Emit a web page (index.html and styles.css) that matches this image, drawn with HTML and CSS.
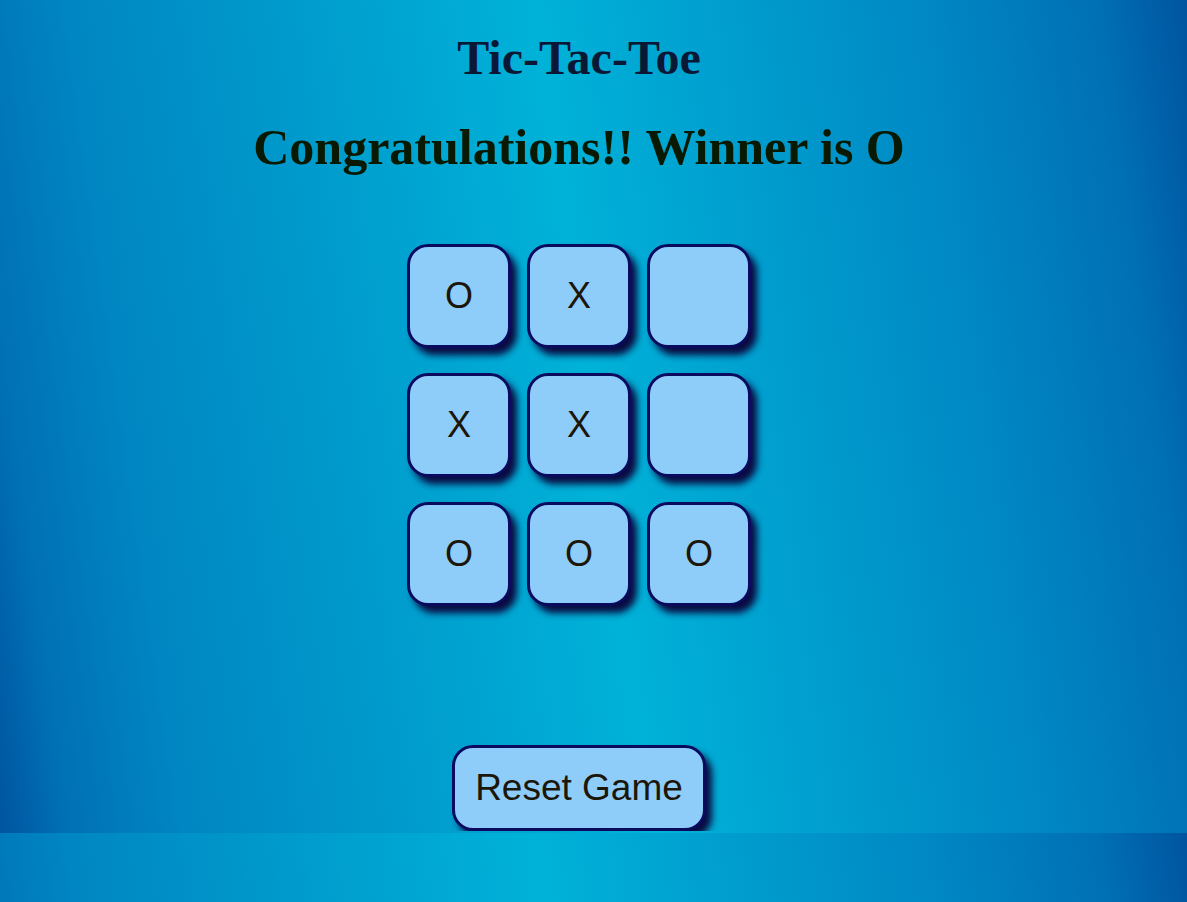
FILE: index.html
```html
<!DOCTYPE html>
<html lang="en">
<head>
<meta charset="utf-8">
<title>Tic-Tac-Toe</title>
<link rel="stylesheet" href="styles.css">
</head>
<body>
<main class="game">
  <h1 class="title">Tic-Tac-Toe</h1>
  <h2 class="msg">Congratulations!! Winner is O</h2>
  <div class="board">
    <button class="cell">O</button>
    <button class="cell">X</button>
    <button class="cell"></button>
    <button class="cell">X</button>
    <button class="cell">X</button>
    <button class="cell"></button>
    <button class="cell">O</button>
    <button class="cell">O</button>
    <button class="cell">O</button>
  </div>
  <button class="reset">Reset Game</button>
</main>
</body>
</html>
```

FILE: styles.css
```css
html {
  background: linear-gradient(82deg, #0054a0 0%, #0070b4 5%, #0086c2 14%, #00b2d8 50%, #0088c4 80%, #0070b4 93%, #0054a0 100%) 0 0 / 100% 833px repeat;
}

body {
  margin: 0;
}

.game {
  width: 1158px;
  display: flex;
  flex-direction: column;
  align-items: center;
}

.title {
  margin: 30px 0 0;
  font-family: "Liberation Serif", "Times New Roman", serif;
  font-weight: bold;
  font-size: 48px;
  line-height: 56px;
  color: #0a1836;
}

.msg {
  margin: 31px 0 0;
  font-family: "Liberation Serif", "Times New Roman", serif;
  font-weight: bold;
  font-size: 50px;
  line-height: 60px;
  color: #0a1a02;
}

.board {
  margin-top: 67px;
  display: grid;
  grid-template-columns: repeat(3, 104px);
  grid-auto-rows: 104px;
  column-gap: 16px;
  row-gap: 25px;
}

.cell,
.reset {
  box-sizing: border-box;
  border: 3px solid #0a0a5e;
  background: #8ecdf9;
  color: #1c1608;
  font-family: "Liberation Sans", Arial, sans-serif;
  box-shadow: 6px 7px 7px #0a0a40;
  cursor: pointer;
}

.cell {
  width: 104px;
  height: 104px;
  border-radius: 21px;
  font-size: 36px;
  padding: 0;
}

.reset {
  margin-top: 139px;
  height: 86px;
  padding: 0 20px;
  border-radius: 21px;
  font-size: 37px;
  line-height: 44px;
}
```
